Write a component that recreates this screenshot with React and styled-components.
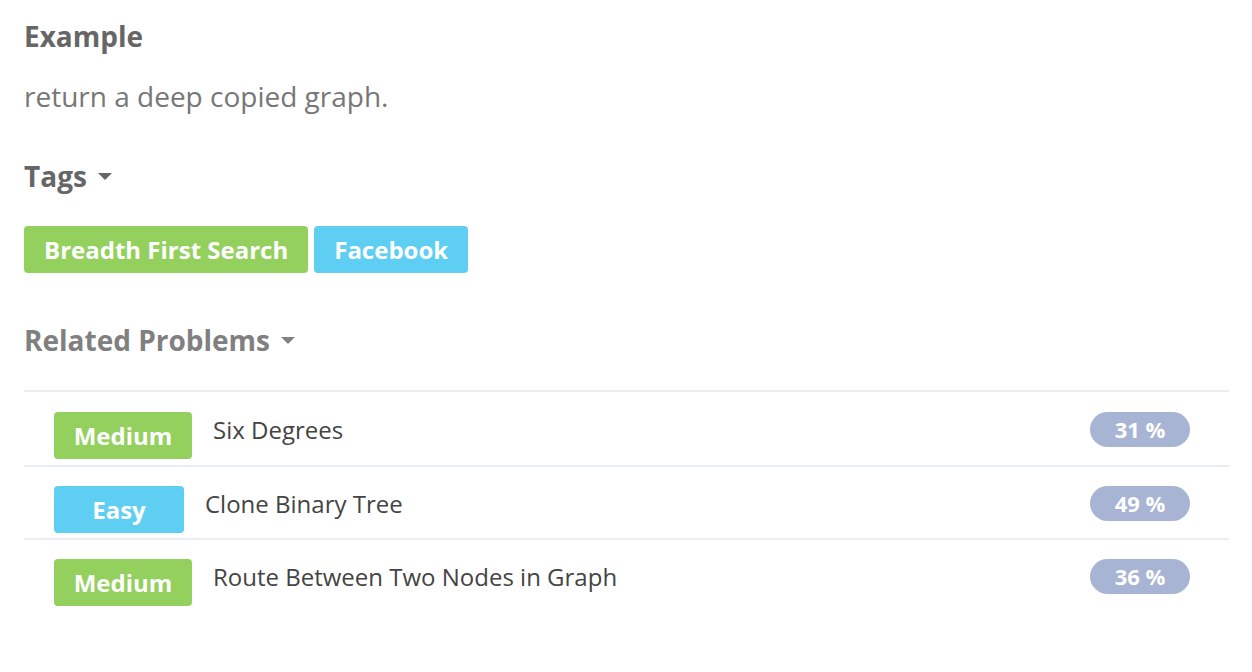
import React from 'react'
import styled, { createGlobalStyle } from 'styled-components'

const GlobalStyle = createGlobalStyle`
  body {
    margin: 0;
    background: #fff;
    font-family: 'Open Sans', 'Noto Sans', sans-serif;
  }
`

const problems = [
  { level: 'Medium', title: 'Six Degrees', rate: 31 },
  { level: 'Easy', title: 'Clone Binary Tree', rate: 49 },
  { level: 'Medium', title: 'Route Between Two Nodes in Graph', rate: 36 },
]

function Caret() {
  return (
    <svg width="14" height="8" viewBox="0 0 14 8">
      <path d="M0 0 L14 0 L7 7 Z" fill="currentColor" />
    </svg>
  )
}

export default function App() {
  return (
    <Page>
      <GlobalStyle />
      <Heading>Example</Heading>
      <Paragraph>return a deep copied graph.</Paragraph>

      <Heading $toggle>
        Tags <Caret />
      </Heading>
      <TagList>
        <Tag $color="#94d05d">Breadth First Search</Tag>
        <Tag $color="#5ecff2">Facebook</Tag>
      </TagList>

      <Heading $toggle $muted>
        Related Problems <Caret />
      </Heading>
      <ProblemList>
        {problems.map((p) => (
          <ProblemRow key={p.title}>
            <Level $easy={p.level === 'Easy'}>{p.level}</Level>
            <Title>{p.title}</Title>
            <Rate>{p.rate} %</Rate>
          </ProblemRow>
        ))}
      </ProblemList>
    </Page>
  )
}

const Page = styled.div`
  padding: 14px 23px 40px 24px;
  color: #666;
`

const Heading = styled.h3`
  margin: 0;
  font-size: 28px;
  font-weight: 700;
  line-height: 44px;
  color: ${(p) => (p.$muted ? '#808080' : '#666')};
  display: flex;
  align-items: center;
  gap: 11px;
  cursor: ${(p) => (p.$toggle ? 'pointer' : 'default')};
  svg {
    margin-top: 2px;
  }
`

const Paragraph = styled.p`
  margin: 16px 0 36px;
  font-size: 28px;
  line-height: 44px;
  color: #777;
`

const TagList = styled.div`
  display: flex;
  gap: 6px;
  margin: 28px 0 45px;
`

const Tag = styled.span`
  background: ${(p) => p.$color};
  color: #fff;
  font-weight: 700;
  font-size: 24px;
  line-height: 47px;
  padding: 0 20px;
  border-radius: 4px;
`

const ProblemList = styled.div`
  margin-top: 28px;
  border-top: 2px solid #eaeef4;
`

const ProblemRow = styled.div`
  display: flex;
  align-items: flex-start;
  height: 73px;
  padding: 20px 40px 0 30px;
  box-sizing: border-box;
  & + & {
    border-top: 2px solid #eaeef4;
    padding-top: 19px;
  }
`

const Level = styled.span`
  width: ${(p) => (p.$easy ? '130px' : '138px')};
  height: 47px;
  line-height: 47px;
  text-align: center;
  border-radius: 4px;
  color: #fff;
  font-weight: 700;
  font-size: 24px;
  background: ${(p) => (p.$easy ? '#5ecff2' : '#94d05d')};
`

const Title = styled.span`
  flex: 1;
  margin-left: 21px;
  font-size: 24px;
  line-height: 36px;
  color: #444;
`

const Rate = styled.span`
  width: 100px;
  height: 35px;
  line-height: 35px;
  text-align: center;
  border-radius: 18px;
  background: #a7b4d4;
  color: #fff;
  font-weight: 700;
  font-size: 22px;
  margin-right: -1px;
`
